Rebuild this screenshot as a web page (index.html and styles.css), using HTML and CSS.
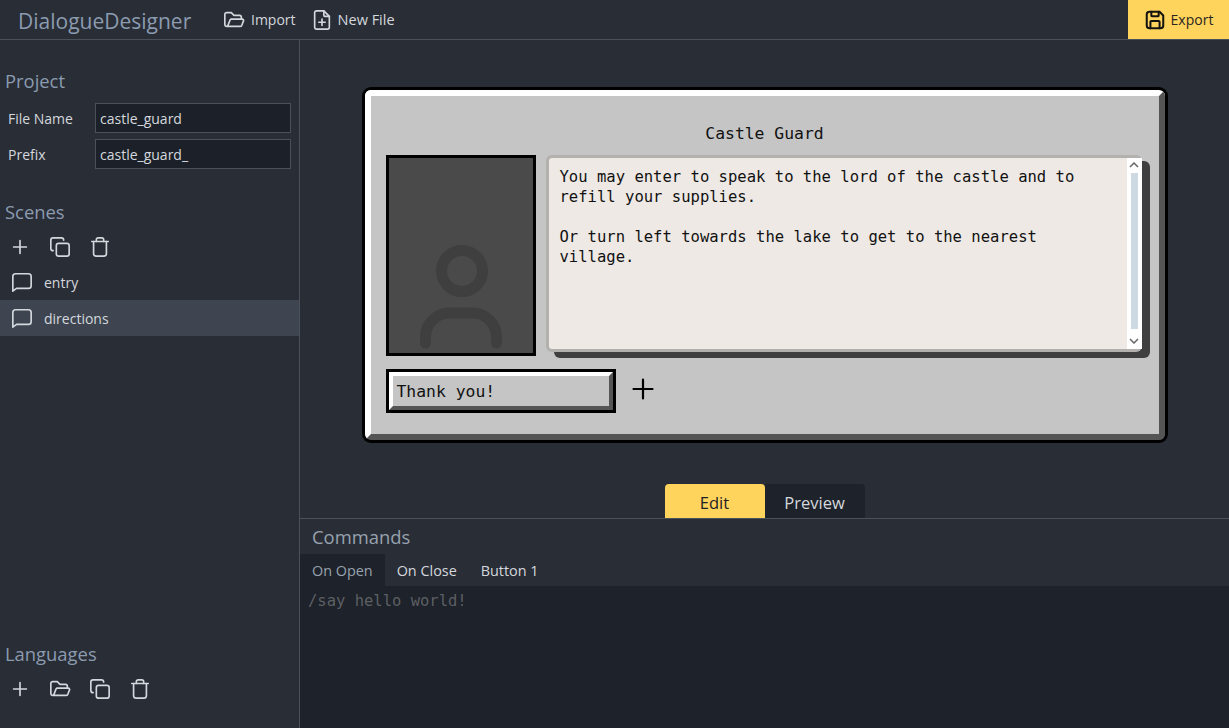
FILE: index.html
```html
<!DOCTYPE html>
<html lang="en">
<head>
    <meta charset="UTF-8">
    <meta name="viewport" content="width=device-width, initial-scale=1.0">
    <title>DialogueDesigner</title>
    <link rel="stylesheet" href="styles.css">
</head>
<body>
    <header class="topbar">
        <div class="brand">DialogueDesigner</div>
        <button class="top-btn import-btn">
            <svg class="icon" viewBox="0 0 24 24"><path d="M5 19l2.8-7.2a1.5 1.5 0 0 1 1.4-.8H21a1.5 1.5 0 0 1 1.4 2l-1.9 4.8a2 2 0 0 1-1.9 1.2H4a2 2 0 0 1-2-2V6a2 2 0 0 1 2-2h5l3 3h6a2 2 0 0 1 2 2v2"/></svg>
            Import
        </button>
        <button class="top-btn new-btn">
            <svg class="icon" viewBox="0 0 24 24"><path d="M14 2v5a1 1 0 0 0 1 1h5"/><path d="M18 22H6a2 2 0 0 1-2-2V4a2 2 0 0 1 2-2h8l6 6v12a2 2 0 0 1-2 2z"/><path d="M12 11v7M8.5 14.500h7"/></svg>
            New File
        </button>
        <button class="export-btn">
            <svg class="icon" viewBox="0 0 24 24"><path d="M6 3h11l4 4v11a3 3 0 0 1-3 3H6a3 3 0 0 1-3-3V6a3 3 0 0 1 3-3z"/><path d="M7 21v-7a1 1 0 0 1 1-1h8a1 1 0 0 1 1 1v7"/><path d="M8 3v4a1 1 0 0 0 1 1h6a1 1 0 0 0 1-1V3"/></svg>
            Export
        </button>
    </header>

    <div class="layout">
        <aside class="sidebar">
            <h2 class="side-title project-title">Project</h2>
            <div class="field">
                <label>File Name</label>
                <input type="text" value="castle_guard">
            </div>
            <div class="field">
                <label>Prefix</label>
                <input type="text" value="castle_guard_">
            </div>

            <h2 class="side-title scenes-title">Scenes</h2>
            <div class="tools">
                <svg class="icon" viewBox="0 0 24 24"><path d="M12 5v14M5 12h14"/></svg>
                <svg class="icon" viewBox="0 0 24 24"><rect x="8" y="8" width="14" height="14" rx="2.500"/><path d="M4.500 16A2.500 2.500 0 0 1 2 13.500V4.500A2.500 2.500 0 0 1 4.500 2h9A2.500 2.500 0 0 1 16 4.500"/></svg>
                <svg class="icon" viewBox="0 0 24 24"><path d="M3 6h18"/><path d="M5 6v13a3 3 0 0 0 3 3h8a3 3 0 0 0 3-3V6"/><path d="M8 6V4a2 2 0 0 1 2-2h4a2 2 0 0 1 2 2v2"/></svg>
            </div>
            <ul class="scene-list">
                <li class="scene">
                    <svg class="icon" viewBox="0 0 24 24"><path d="M2 22V6a3 3 0 0 1 3-3h14a3 3 0 0 1 3 3v10a3 3 0 0 1-3 3H6z"/></svg>
                    entry
                </li>
                <li class="scene active">
                    <svg class="icon" viewBox="0 0 24 24"><path d="M2 22V6a3 3 0 0 1 3-3h14a3 3 0 0 1 3 3v10a3 3 0 0 1-3 3H6z"/></svg>
                    directions
                </li>
            </ul>

            <div class="languages">
                <h2 class="side-title">Languages</h2>
                <div class="tools">
                    <svg class="icon" viewBox="0 0 24 24"><path d="M12 5v14M5 12h14"/></svg>
                    <svg class="icon" viewBox="0 0 24 24"><path d="M5 19l2.8-7.2a1.500 1.500 0 0 1 1.400-.8H21a1.500 1.500 0 0 1 1.400 2l-1.900 4.800a2 2 0 0 1-1.900 1.200H4a2 2 0 0 1-2-2V6a2 2 0 0 1 2-2h5l3 3h6a2 2 0 0 1 2 2v2"/></svg>
                    <svg class="icon" viewBox="0 0 24 24"><rect x="8" y="8" width="14" height="14" rx="2.500"/><path d="M4.500 16A2.500 2.500 0 0 1 2 13.500V4.500A2.500 2.500 0 0 1 4.500 2h9A2.500 2.500 0 0 1 16 4.500"/></svg>
                    <svg class="icon" viewBox="0 0 24 24"><path d="M3 6h18"/><path d="M5 6v13a3 3 0 0 0 3 3h8a3 3 0 0 0 3-3V6"/><path d="M8 6V4a2 2 0 0 1 2-2h4a2 2 0 0 1 2 2v2"/></svg>
                </div>
            </div>
        </aside>

        <main class="main">
            <section class="preview">
                <div class="dialog">
                    <div class="dialog-inner">
                        <div class="speaker">Castle Guard</div>
                        <div class="dialog-row">
                            <div class="portrait">
                                <svg viewBox="0 0 144 195"><circle cx="73" cy="113" r="20.500"/><path d="M36.500 185v-6a24 24 0 0 1 24-24h23a24 24 0 0 1 24 24v6"/></svg>
                            </div>
                            <div class="textbox">
                                <div class="textbox-text">You may enter to speak to the lord of the castle and to
refill your supplies.

Or turn left towards the lake to get to the nearest
village.</div>
                                <div class="scrollbar">
                                    <svg class="arrow" viewBox="0 0 10 6"><path d="M1 5l4-4 4 4"/></svg>
                                    <div class="thumb"></div>
                                    <svg class="arrow" viewBox="0 0 10 6"><path d="M1 1l4 4 4-4"/></svg>
                                </div>
                            </div>
                        </div>
                        <div class="choices">
                            <div class="choice">Thank you!</div>
                            <svg class="add-choice" viewBox="0 0 24 24"><path d="M12 2.500v19M2.500 12h19"/></svg>
                        </div>
                    </div>
                </div>
            </section>

            <div class="mode-tabs">
                <div class="mode-tab active">Edit</div>
                <div class="mode-tab">Preview</div>
            </div>

            <section class="commands">
                <h2 class="commands-title">Commands</h2>
                <div class="command-tabs">
                    <div class="command-tab active">On Open</div>
                    <div class="command-tab">On Close</div>
                    <div class="command-tab">Button 1</div>
                </div>
                <div class="editor">/say hello world!</div>
            </section>
        </main>
    </div>
</body>
</html>
```

FILE: styles.css
```css
* {
    box-sizing: border-box;
}

body {
    font-family: 'Open Sans', 'Noto Sans', sans-serif;
    background: #292d36;
    color: #d4d8dd;
    margin: 0;
    height: 100vh;
    display: flex;
    flex-direction: column;
    overflow: hidden;
    font-size: 14px;
}

.icon {
    width: 22px;
    height: 22px;
    fill: none;
    stroke: currentColor;
    stroke-width: 1.8;
    stroke-linecap: round;
    stroke-linejoin: round;
    flex: none;
}

.topbar {
    height: 40px;
    border-bottom: 1px solid #4b5159;
    display: flex;
    align-items: center;
    flex: none;
}

.brand {
    font-size: 21px;
    color: #8b9bb0;
    margin-left: 18px;
    width: 205px;
    padding-top: 2px;
}

.top-btn {
    background: none;
    border: none;
    color: #d4d8dd;
    font: inherit;
    display: flex;
    align-items: center;
    gap: 6px;
    padding: 0;
}

.import-btn {
    margin-right: 15px;
}

.new-btn {
    gap: 5px;
    font-size: 14.500px;
}

.export-btn {
    margin-left: auto;
    width: 101px;
    height: 39px;
    background: #ffd45c;
    border: none;
    color: #2a2520;
    font: inherit;
    display: flex;
    align-items: center;
    justify-content: center;
    gap: 5px;
    padding: 0;
}

.export-btn .icon {
    color: #15130f;
    stroke-width: 2.200;
}

.layout {
    flex: 1;
    display: flex;
    min-height: 0;
}

.sidebar {
    width: 300px;
    border-right: 1px solid #4b5159;
    display: flex;
    flex-direction: column;
    flex: none;
}

.side-title {
    font-size: 18.400px;
    font-weight: 400;
    color: #8b9bb0;
    margin: 0 0 0 5px;
    line-height: 26px;
}

.project-title {
    margin-top: 28px;
    margin-bottom: 9px;
}

.scenes-title {
    margin-top: 24px;
}

.field {
    display: flex;
    align-items: center;
    height: 30px;
    margin-bottom: 6px;
    padding-left: 8px;
}

.field label {
    width: 87px;
}

.field input {
    width: 196px;
    height: 30px;
    background: #1c2129;
    border: 1px solid #4b5159;
    color: #d4d8dd;
    font: inherit;
    padding: 0 4px;
    outline: none;
}

.tools {
    display: flex;
    gap: 18px;
    padding-left: 9px;
    margin-top: 11px;
    height: 22px;
}

.scene-list {
    list-style: none;
    margin: 6px 0 0;
    padding: 0;
}

.scene {
    height: 36px;
    display: flex;
    align-items: center;
    gap: 11px;
    padding-left: 11px;
}

.scene.active {
    background: #3e4550;
}

.languages {
    margin-top: auto;
    padding-bottom: 28px;
}

.main {
    flex: 1;
    min-width: 0;
    display: flex;
    flex-direction: column;
}

.preview {
    flex: 1;
    display: flex;
    align-items: center;
    justify-content: center;
    padding-top: 6px;
}

.dialog {
    width: 806px;
    height: 356px;
    background: #000;
    border-radius: 9px;
    padding: 3px;
    font-family: 'DejaVu Sans Mono', monospace;
    color: #111;
}

.dialog-inner {
    height: 100%;
    background: #c5c5c5;
    border: 6px solid;
    border-color: #fff #555 #555 #fff;
    border-radius: 6px;
    padding: 0 15px;
}

.speaker {
    height: 59px;
    padding-top: 28px;
    line-height: 20px;
    font-size: 16.400px;
    text-align: center;
}

.dialog-row {
    display: flex;
    gap: 10px;
    align-items: flex-start;
    height: 201px;
}

.portrait {
    width: 150px;
    height: 201px;
    background: #4a4a4a;
    border: 3px solid #000;
    flex: none;
}

.portrait svg {
    display: block;
    width: 100%;
    height: 100%;
    fill: none;
    stroke: #3f3f3f;
    stroke-width: 11;
    stroke-linecap: round;
}

.textbox {
    width: 596px;
    height: 197px;
    background: #eee9e5;
    border: solid #b3b1ae;
    border-width: 3px 0 3px 3px;
    border-radius: 6px;
    box-shadow: 8px 6px 0 #3f3f3f;
    display: flex;
}

.textbox-text {
    flex: 1;
    padding: 9px 0 0 11px;
    font-size: 15.550px;
    line-height: 20px;
    white-space: pre-wrap;
}

.scrollbar {
    width: 15px;
    background: #fff;
    display: flex;
    flex-direction: column;
    align-items: center;
    padding: 4px 0 5px;
}

.arrow {
    width: 10px;
    height: 6px;
    flex: none;
    fill: none;
    stroke: #666;
    stroke-width: 1.500;
}

.thumb {
    flex: 1;
    width: 7px;
    margin: 5px 0 9px;
    background: #cdd9e3;
}

.choices {
    display: flex;
    align-items: center;
    gap: 15px;
    margin-top: 13px;
}

.choice {
    width: 224px;
    height: 38px;
    margin: 3px;
    background: #c5c5c5;
    border: 4px solid;
    border-color: #fff #555 #555 #fff;
    box-shadow: 0 0 0 3px #000;
    font-size: 16.400px;
    line-height: 32px;
    padding-left: 4px;
}

.add-choice {
    width: 24px;
    height: 24px;
    fill: none;
    stroke: #000;
    stroke-width: 2.200;
    stroke-linecap: round;
    margin-top: -4px;
}

.mode-tabs {
    display: flex;
    justify-content: center;
    flex: none;
    height: 34px;
}

.mode-tab {
    width: 100px;
    background: #1e222a;
    font-size: 16.500px;
    display: flex;
    align-items: center;
    justify-content: center;
    padding-top: 3px;
    border-radius: 0 4px 0 0;
}

.mode-tab.active {
    background: #ffd45c;
    color: #1d2025;
    border-radius: 4px 4px 0 0;
}

.commands {
    height: 210px;
    flex: none;
    border-top: 1px solid #4b5159;
    display: flex;
    flex-direction: column;
}

.commands-title {
    font-size: 18.400px;
    font-weight: 400;
    color: #98a2ae;
    margin: 0;
    padding-left: 12px;
    height: 35px;
    line-height: 36px;
}

.command-tabs {
    display: flex;
    height: 32px;
    flex: none;
}

.command-tab {
    padding: 0 12px;
    line-height: 33px;
    font-size: 14.400px;
}

.command-tab.active {
    background: #1e222a;
    color: #98a2ae;
}

.editor {
    flex: 1;
    background: #1e222a;
    font-family: 'DejaVu Sans Mono', monospace;
    font-size: 15.500px;
    color: #5c5f63;
    padding: 6px 8px;
}
```
